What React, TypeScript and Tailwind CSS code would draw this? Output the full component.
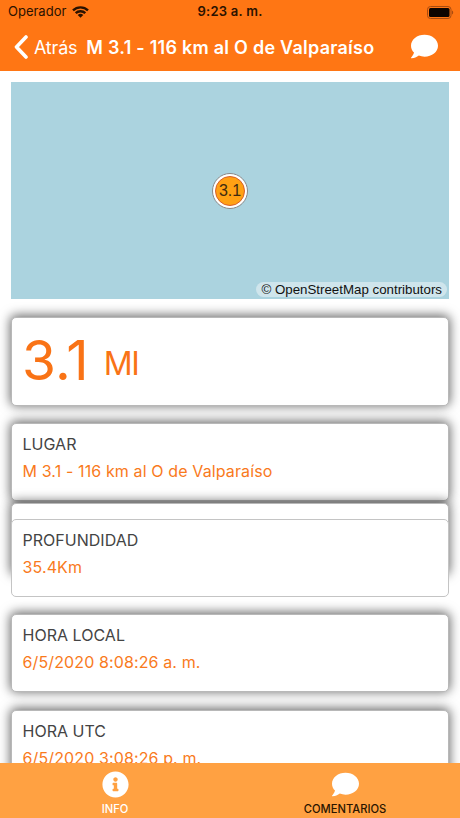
import { FaComment, FaInfoCircle } from "react-icons/fa";

type CardProps = {
  label: string;
  value: string;
  className: string;
};

const raised = "border border-[#b8b8b8] shadow-[0_-1px_11px_1px_rgba(0,0,0,0.58)]";

function InfoCard({ label, value, className }: CardProps) {
  return (
    <div className={`h-[78px] shrink-0 rounded-[5px] bg-white px-[10.5px] pt-[8px] ${className}`}>
      <p className="text-[16px] leading-[24px] tracking-[0.02px] text-[#444]">{label}</p>
      <p className="mt-[3px] text-[16px] leading-[24px] tracking-[0.12px] text-[#f97a1c]">{value}</p>
    </div>
  );
}

function StatusBar() {
  return (
    <div className="grid h-[23px] grid-cols-3 items-center pt-px pr-[6px] pl-2 text-[13px] text-[#2b1200]">
      <div className="flex items-center gap-[6px]">
        <span>Operador</span>
        {/* Wifi */}
        <svg width="17" height="12" viewBox="0 0 17 12" fill="none" stroke="#2b1200" strokeWidth="2.4">
          <path d="M1 4.4a10.8 10.8 0 0 1 15 0" />
          <path d="M3.7 7.2a6.9 6.9 0 0 1 9.6 0" />
          <path d="M8.5 11.8L5.7 9.1a4 4 0 0 1 5.6 0z" fill="#2b1200" stroke="none" />
        </svg>
      </div>
      <span className="pr-[2px] text-center font-semibold tracking-[0.25px] whitespace-nowrap">9:23 a. m.</span>
      {/* Battery */}
      <svg className="justify-self-end" width="27" height="13" viewBox="0 0 27 13">
        <rect x="0.5" y="0.5" width="23.5" height="12" rx="3" fill="none" stroke="#a84b10" />
        <rect x="2" y="2" width="20.5" height="9" rx="1.5" fill="#0d0400" />
        <path d="M25 4.5c1.6.6 1.6 3.4 0 4z" fill="#a84b10" />
      </svg>
    </div>
  );
}

export default function App() {
  return (
    <div className="flex h-[818px] w-[460px] flex-col overflow-hidden bg-white font-[Inter,sans-serif]">
      <header className="relative z-10 h-[71px] shrink-0 bg-[#ff7614]">
        <StatusBar />
        <div className="flex h-[48px] items-center pr-[22px] pl-[14px] text-white">
          <svg width="14" height="24" viewBox="0 0 14 24" fill="none" stroke="white" strokeWidth="3.6" strokeLinecap="round" strokeLinejoin="round">
            <path d="M12 2L2.5 12L12 22" />
          </svg>
          <span className="ml-[6px] text-[18px] tracking-[-0.2px]">Atrás</span>
          <h1 className="ml-[9px] text-[18px] font-semibold tracking-[0.25px] whitespace-nowrap">M 3.1 - 116 km al O de Valparaíso</h1>
          <FaComment className="mb-[2px] ml-auto h-[27px] w-[27px]" />
        </div>
      </header>

      <main className="flex min-h-0 flex-1 flex-col overflow-hidden px-[11px] pt-[11px]">
        {/* Map */}
        <div className="relative flex h-[217px] shrink-0 items-center justify-center bg-[#abd3df]">
          <div className="flex h-9 w-9 items-center justify-center rounded-full border border-[#888] bg-white p-[2px]">
            <div className="flex h-full w-full items-center justify-center rounded-full border border-[#d9602b] bg-[#ffa114] font-['Liberation_Sans',sans-serif] text-[16px] text-[#3d2b10]">
              3.1
            </div>
          </div>
          <span className="absolute right-[2px] bottom-[2px] rounded-full bg-[#cfe5ec] px-[5px] font-['Liberation_Sans',sans-serif] text-[13.3px] leading-[15px] text-[#111]">
            © OpenStreetMap contributors
          </span>
        </div>

        <div className={`mt-[18px] flex h-[89px] shrink-0 items-start rounded-[5px] bg-white px-[10px] text-[#f97316] ${raised}`}>
          <span className="text-[55px] leading-[85px] tracking-[0.2px]">3.1</span>
          <span className="ml-[15px] text-[32px] leading-[92px] tracking-[-1.5px]">MI</span>
        </div>

        <InfoCard label="LUGAR" value="M 3.1 - 116 km al O de Valparaíso" className={`mt-[17px] ${raised}`} />
        {/* Empty card, mostly covered by the next one */}
        <div className={`mt-[2px] h-[72px] shrink-0 rounded-[5px] bg-white ${raised}`} />
        <InfoCard label="PROFUNDIDAD" value="35.4Km" className="z-10 -mt-[56px] border border-[#c4c4c4]" />
        <InfoCard label="HORA LOCAL" value="6/5/2020 8:08:26 a. m." className={`mt-[17px] ${raised}`} />
        <InfoCard label="HORA UTC" value="6/5/2020 3:08:26 p. m." className={`mt-[18px] ${raised}`} />
      </main>

      <nav className="relative z-10 grid h-[55px] shrink-0 grid-cols-2 bg-[#ffa142] text-[11.2px] font-medium">
        <div className="flex flex-col items-center pt-2 text-white">
          <FaInfoCircle className="h-[27px] w-[27px]" />
          <span className="mt-[4px] leading-[14px]">INFO</span>
        </div>
        <div className="flex flex-col items-center pt-2 text-[#2b1500]">
          <FaComment className="h-[27px] w-[27px] text-white" />
          <span className="mt-[4px] leading-[14px]">COMENTARIOS</span>
        </div>
      </nav>
    </div>
  );
}
